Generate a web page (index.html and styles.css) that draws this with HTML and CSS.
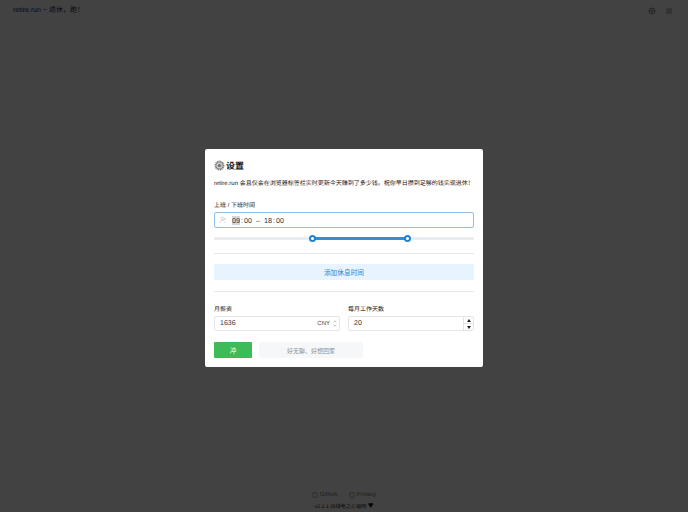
FILE: index.html
```html
<!DOCTYPE html>
<html lang="zh-CN">
<head>
    <meta charset="UTF-8">
    <meta name="viewport" content="width=device-width, initial-scale=1.0">
    <title>retire.run</title>
    <link rel="stylesheet" href="styles.css">
</head>
<body>
    <div class="page">
        <header class="topbar">
            <div class="brand">retire.run ~ 退休，跑！</div>
            <div class="topbar-icons">
                <svg class="top-icon" viewBox="0 0 16 16"><path d="M8 2a6 6 0 1 0 0 12A6 6 0 0 0 8 2z"/><path d="M2 8h12M8 2v12"/></svg>
                <svg class="top-icon" viewBox="0 0 16 16"><path d="M2 4h12M2 8h12M2 12h12"/></svg>
            </div>
        </header>
        <footer class="footer">
            <div class="footer-links">
                <span class="footer-link">
                    <svg class="footer-icon" viewBox="0 0 10 10"><rect x="1.5" y="1" width="7" height="8" rx="1"/></svg>
                    Github
                </span>
                <span class="footer-link">
                    <svg class="footer-icon" viewBox="0 0 10 10"><rect x="1.5" y="1" width="7" height="8" rx="1"/></svg>
                    Privacy
                </span>
            </div>
            <div class="footer-note">v2.1.1 由绿电之心驱动 <span class="heart">♥</span></div>
        </footer>
    </div>

    <div class="overlay">
        <div class="modal">
            <h2 class="modal-title">
                <svg class="gear" viewBox="0 0 24 24">
                    <circle cx="12" cy="12" r="9" fill="#9a9a9a" stroke="#777" stroke-width="4" stroke-dasharray="2 1.6"/>
                    <circle cx="12" cy="12" r="6.5" fill="#c9c9c9"/>
                    <circle cx="12" cy="12" r="3.5" fill="#6f6f6f"/>
                </svg>
                设置
            </h2>
            <p class="intro">retire.run 会且仅会在浏览器标签栏实时更新今天赚到了多少钱。祝你早日攒到足够的钱实现退休！</p>

            <label class="field-label">上班 / 下班时间</label>
            <div class="time-input">
                <svg class="person-icon" viewBox="0 0 12 12">
                    <circle cx="5" cy="3.6" r="2.1"/>
                    <path d="M1 10.5c.3-2.6 1.8-3.8 4-3.8s3.7 1.2 4 3.8M9.2 3v3M7.8 4.5h2.8"/>
                </svg>
                <span class="time-part selected">09</span><span class="colon">:</span><span class="time-part">00</span>
                <span class="dash">–</span>
                <span class="time-part">18</span><span class="colon">:</span><span class="time-part">00</span>
            </div>

            <div class="slider">
                <div class="slider-range"></div>
                <span class="slider-thumb thumb-start"></span>
                <span class="slider-thumb thumb-end"></span>
            </div>

            <hr class="divider">
            <button class="add-break">添加休息时间</button>
            <hr class="divider">

            <div class="form-row">
                <div class="form-col">
                    <label class="field-label">月薪资</label>
                    <div class="box-input">
                        <span class="box-value">1636</span>
                        <span class="currency">CNY</span>
                        <svg class="chevrons" viewBox="0 0 6 10"><path d="M1.5 3.5 3 2l1.5 1.5M1.5 6.5 3 8l1.5-1.5"/></svg>
                    </div>
                </div>
                <div class="form-col">
                    <label class="field-label">每月工作天数</label>
                    <div class="box-input">
                        <span class="box-value">20</span>
                        <div class="stepper">
                            <span class="step"><i class="arrow-up"></i></span>
                            <span class="step"><i class="arrow-down"></i></span>
                        </div>
                    </div>
                </div>
            </div>

            <div class="actions">
                <button class="btn-go">冲</button>
                <button class="btn-bored">好无聊、好想回家</button>
            </div>
        </div>
    </div>
</body>
</html>
```

FILE: styles.css
```css
* {
    box-sizing: border-box;
}

html,
body {
    height: 100%;
}

body {
    margin: 0;
    background-color: #fff;
    font-family: "Liberation Sans", "Noto Sans CJK SC", sans-serif;
    color: #1f2328;
    text-rendering: geometricPrecision;
}

.page {
    height: 100%;
    display: flex;
    flex-direction: column;
    justify-content: space-between;
}

.topbar {
    display: flex;
    justify-content: space-between;
    align-items: center;
    padding: 5px 15px 0 13px;
}

.brand {
    font-size: 7px;
    line-height: 12px;
}

.topbar-icons {
    display: flex;
    gap: 9px;
}

.top-icon {
    width: 8px;
    height: 8px;
    fill: none;
    stroke: #777;
    stroke-width: 1.6;
}

.footer {
    display: flex;
    flex-direction: column;
    align-items: center;
    font-size: 6px;
}

.footer-links {
    display: flex;
    gap: 11px;
    line-height: 12px;
    color: #777;
}

.footer-link {
    display: flex;
    align-items: center;
    gap: 2px;
}

.footer-icon {
    width: 6px;
    height: 6px;
    fill: none;
    stroke: #777;
}

.footer-note {
    line-height: 10px;
    font-size: 5.2px;
}

.heart {
    font-size: 9px;
    line-height: 8px;
    color: #000;
}

.overlay {
    position: fixed;
    inset: 0;
    display: flex;
    justify-content: center;
    padding-top: 149px;
    background-color: rgba(0, 0, 0, 0.74);
}

.modal {
    width: 278px;
    height: 218px;
    padding: 9px;
    background-color: #fff;
    border-radius: 2px;
}

.modal-title {
    display: flex;
    align-items: center;
    gap: 1px;
    margin: 0;
    height: 15px;
    font-size: 9px;
    font-weight: 700;
    color: #111;
}

.gear {
    width: 11px;
    height: 11px;
}

.intro {
    margin: 6px 0 0;
    font-size: 6px;
    line-height: 10px;
    white-space: nowrap;
    color: #111;
}

.field-label {
    display: block;
    font-size: 6px;
    line-height: 9px;
    color: #111;
}

.intro + .field-label {
    margin-top: 13px;
}

.time-input {
    display: flex;
    align-items: center;
    height: 16px;
    margin-top: 1px;
    padding-left: 4px;
    border: 1px solid #8fc0ea;
    border-radius: 2px;
    font-size: 7.2px;
    color: #333;
}

.person-icon {
    width: 8px;
    height: 8px;
    margin-right: 5px;
    fill: none;
    stroke: #b5b5b5;
    stroke-width: 0.8;
}

.time-part.selected {
    background-color: #d5d7da;
}

.colon {
    margin: 0 1px;
}

.dash {
    margin: 0 4px 0 4px;
}

.slider {
    position: relative;
    height: 3px;
    margin-top: 9px;
    background-color: #e9ecef;
    border-radius: 2px;
}

.slider-range {
    position: absolute;
    left: 98px;
    width: 95px;
    height: 3px;
    background-color: #2f8fdc;
}

.slider-thumb {
    position: absolute;
    top: -2px;
    width: 7px;
    height: 7px;
    background-color: #fff;
    border: 2px solid #2283d3;
    border-radius: 50%;
}

.thumb-start {
    left: 95px;
}

.thumb-end {
    left: 190px;
}

.divider {
    height: 1px;
    margin: 0;
    border: 0;
    background-color: #e6e8ea;
}

.slider + .divider {
    margin-top: 13px;
}

.add-break {
    display: block;
    width: 100%;
    height: 16px;
    margin: 10px 0 11px;
    padding: 0;
    border: 0;
    border-radius: 1px;
    background-color: #e7f3fe;
    color: #2b88d8;
    font-family: inherit;
    font-size: 6.7px;
}

.form-row {
    display: grid;
    grid-template-columns: 126px 126px;
    gap: 8px;
    margin-top: 14px;
}

.box-input {
    display: flex;
    align-items: center;
    height: 15px;
    margin-top: 1px;
    padding-left: 5px;
    border: 1px solid #e3e5e8;
    border-radius: 2px;
    font-size: 7px;
    color: #333;
}

.box-value {
    flex: 1;
}

.currency {
    font-size: 6px;
    color: #444;
}

.chevrons {
    width: 6px;
    height: 9px;
    margin: 0 1px 0 2px;
    fill: none;
    stroke: #888;
    stroke-width: 0.7;
}

.stepper {
    display: flex;
    flex-direction: column;
    width: 10px;
    height: 100%;
    border-left: 1px solid #e3e5e8;
}

.step {
    flex: 1;
    display: flex;
    align-items: center;
    justify-content: center;
}

.step + .step {
    border-top: 1px solid #e3e5e8;
}

.arrow-up {
    border-left: 2.5px solid transparent;
    border-right: 2.5px solid transparent;
    border-bottom: 3px solid #222;
}

.arrow-down {
    border-left: 2.5px solid transparent;
    border-right: 2.5px solid transparent;
    border-top: 3px solid #222;
}

.actions {
    display: flex;
    gap: 7px;
    margin-top: 11px;
}

.btn-go {
    width: 38px;
    height: 16px;
    padding: 0;
    border: 0;
    border-radius: 1px;
    background-color: #3cbb58;
    color: #fff;
    font-family: inherit;
    font-size: 6.5px;
}

.btn-bored {
    width: 104px;
    height: 16px;
    padding: 0;
    border: 0;
    border-radius: 2px;
    background-color: #f6f7f8;
    color: #8a8f94;
    font-family: inherit;
    font-size: 6px;
}
```
